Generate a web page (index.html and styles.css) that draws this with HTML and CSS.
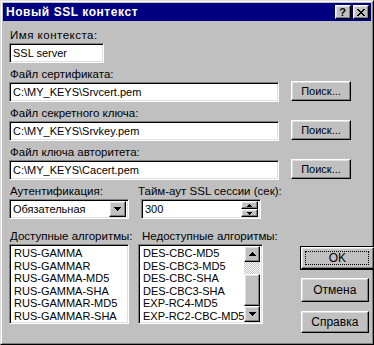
FILE: index.html
```html
<!DOCTYPE html>
<html lang="ru">
<head>
<meta charset="utf-8">
<title>Новый SSL контекст</title>
<link rel="stylesheet" href="styles.css">
</head>
<body>
<div class="window">
  <div class="frame">
    <div class="titlebar">
      <span class="title">Новый SSL контекст</span>
      <div class="tbtn tbtn-help">?</div>
      <div class="tbtn tbtn-close">
        <svg width="8" height="7" viewBox="0 0 8 7" shape-rendering="crispEdges"><path d="M0 0h2v1h-2z M6 0h2v1h-2z M1 1h2v1h-2z M5 1h2v1h-2z M2 2h4v1h-4z M3 3h2v1h-2z M2 4h4v1h-4z M1 5h2v1h-2z M5 5h2v1h-2z M0 6h2v1h-2z M6 6h2v1h-2z" fill="#000"/></svg>
      </div>
    </div>
    <div class="content">
      <div class="group">
        <div class="label label-name">Имя контекста:</div>
        <div class="edit edit-name">SSL server</div>
      </div>
      <div class="group">
        <div class="label">Файл сертификата:</div>
        <div class="filerow">
          <div class="edit edit-file">C:\MY_KEYS\Srvcert.pem</div>
          <div class="btn btn-browse">Поиск...</div>
        </div>
      </div>
      <div class="group">
        <div class="label">Файл секретного ключа:</div>
        <div class="filerow">
          <div class="edit edit-file">C:\MY_KEYS\Srvkey.pem</div>
          <div class="btn btn-browse">Поиск...</div>
        </div>
      </div>
      <div class="group">
        <div class="label">Файл ключа авторитета:</div>
        <div class="filerow">
          <div class="edit edit-file">C:\MY_KEYS\Cacert.pem</div>
          <div class="btn btn-browse">Поиск...</div>
        </div>
      </div>
      <div class="pairrow">
        <div class="col col-left">
          <div class="label">Аутентификация:</div>
          <div class="edit combo">
            <span class="combo-text">Обязательная</span>
            <div class="btn drop">
              <svg width="7" height="4" viewBox="0 0 7 4" shape-rendering="crispEdges"><path d="M0 0h7v1h-7z M1 1h5v1h-5z M2 2h3v1h-3z M3 3h1v1h-1z" fill="#000"/></svg>
            </div>
          </div>
        </div>
        <div class="col col-right">
          <div class="label label-timeout">Тайм-аут SSL сессии (сек):</div>
          <div class="edit spin">
            <span class="spin-text">300</span>
            <div class="spin-btns">
              <div class="btn spin-btn"><svg width="5" height="3" viewBox="0 0 5 3" shape-rendering="crispEdges"><path d="M2 0h1v1h-1z M1 1h3v1h-3z M0 2h5v1h-5z" fill="#000"/></svg></div>
              <div class="btn spin-btn"><svg width="5" height="3" viewBox="0 0 5 3" shape-rendering="crispEdges"><path d="M0 0h5v1h-5z M1 1h3v1h-3z M2 2h1v1h-1z" fill="#000"/></svg></div>
            </div>
          </div>
        </div>
      </div>
      <div class="bottomrow">
        <div class="col col-left">
          <div class="label">Доступные алгоритмы:</div>
          <div class="edit list list-left">
            <div class="items">
              <div>RUS-GAMMA</div>
              <div>RUS-GAMMAR</div>
              <div>RUS-GAMMA-MD5</div>
              <div>RUS-GAMMA-SHA</div>
              <div>RUS-GAMMAR-MD5</div>
              <div>RUS-GAMMAR-SHA</div>
            </div>
          </div>
        </div>
        <div class="col col-list2">
          <div class="label label-unavail">Недоступные алгоритмы:</div>
          <div class="edit list list-right">
            <div class="items">
              <div>DES-CBC-MD5</div>
              <div>DES-CBC3-MD5</div>
              <div>DES-CBC-SHA</div>
              <div>DES-CBC3-SHA</div>
              <div>EXP-RC4-MD5</div>
              <div>EXP-RC2-CBC-MD5</div>
            </div>
            <div class="vscroll">
              <div class="btn sb-btn"><svg width="7" height="4" viewBox="0 0 7 4" shape-rendering="crispEdges"><path d="M3 0h1v1h-1z M2 1h3v1h-3z M1 2h5v1h-5z M0 3h7v1h-7z" fill="#000"/></svg></div>
              <div class="sb-track"></div>
              <div class="btn sb-thumb"></div>
              <div class="btn sb-btn"><svg width="7" height="4" viewBox="0 0 7 4" shape-rendering="crispEdges"><path d="M0 0h7v1h-7z M1 1h5v1h-5z M2 2h3v1h-3z M3 3h1v1h-1z" fill="#000"/></svg></div>
            </div>
          </div>
        </div>
        <div class="actions">
          <div class="btn-default"><div class="btn btn-ok"><span class="focus">OK</span></div></div>
          <div class="btn btn-cancel">Отмена</div>
          <div class="btn btn-help">Справка</div>
        </div>
      </div>
    </div>
  </div>
</div>
</body>
</html>
```
FILE: styles.css
```css
html, body {
  margin: 0;
  padding: 0;
  background: #c0c0c0;
}
body {
  width: 374px;
  height: 345px;
  overflow: hidden;
  font-family: "Liberation Sans", Arial, sans-serif;
  font-size: 11px;
  color: #000;
}
.window {
  box-sizing: border-box;
  width: 374px;
  height: 345px;
  border: 1px solid;
  border-color: #dfdfdf #000 #000 #dfdfdf;
  background: #c0c0c0;
}
.frame {
  box-sizing: border-box;
  height: 100%;
  border: 1px solid;
  border-color: #fff #808080 #808080 #fff;
  padding: 1px;
  display: flex;
  flex-direction: column;
}
.titlebar {
  height: 18px;
  background: #000080;
  display: flex;
  align-items: center;
  padding: 0 2px 0 3px;
}
.title {
  color: #fff;
  font-weight: bold;
  font-size: 12px;
  letter-spacing: 0.55px;
  line-height: 18px;
  flex: 1;
}
.tbtn {
  box-sizing: border-box;
  width: 16px;
  height: 14px;
  background: #c0c0c0;
  border: 1px solid;
  border-color: #fff #000 #000 #fff;
  box-shadow: inset -1px -1px #808080, inset 1px 1px #dfdfdf;
  display: flex;
  align-items: center;
  justify-content: center;
  font-weight: bold;
  font-size: 11px;
  line-height: 12px;
}
.tbtn-help {
  margin-right: 2px;
  padding-right: 1px;
}
.tbtn-close svg {
  display: block;
  margin-left: -1px;
}
.content {
  padding: 8px 0 0 6px;
}
.label {
  line-height: 13px;
  height: 13px;
  margin-bottom: 1px;
  padding-left: 1px;
  white-space: nowrap;
  font-size: 11.5px;
}
.label-name {
  letter-spacing: 0.5px;
}
.group {
  margin-bottom: 5px;
}
.edit {
  box-sizing: border-box;
  height: 20px;
  background: #fff;
  border: 1px solid;
  border-color: #808080 #fff #fff #808080;
  box-shadow: inset 1px 1px #000, inset -1px -1px #dfdfdf;
  padding: 1px 2px 0 3px;
  line-height: 16px;
  white-space: nowrap;
}
.edit-name {
  width: 95px;
}
.filerow {
  display: flex;
  align-items: flex-start;
}
.edit-file {
  width: 270px;
}
.btn {
  box-sizing: border-box;
  background: #c0c0c0;
  border: 1px solid;
  border-color: #fff #000 #000 #fff;
  box-shadow: inset -1px -1px #808080, inset 1px 1px #dfdfdf;
  display: flex;
  align-items: center;
  justify-content: center;
}
.btn-browse {
  width: 60px;
  height: 20px;
  margin-left: 12px;
  margin-top: -1px;
}
.pairrow {
  display: flex;
  margin-top: 2px;
}
.col-left {
  width: 120px;
}
.col-right {
  margin-left: 9px;
}
.combo {
  display: flex;
  align-items: flex-start;
  padding: 1px 2px 0 3px;
}
.combo-text {
  flex: 1;
}
.drop {
  width: 17px;
  height: 16px;
}
.label-timeout {
  padding-left: 0;
}
.spin {
  width: 120px;
  margin-left: 3px;
  display: flex;
  align-items: flex-start;
}
.spin-text {
  flex: 1;
}
.spin-btns {
  display: flex;
  flex-direction: column;
}
.spin-btn {
  width: 17px;
  height: 8px;
}
.spin-btn svg {
  display: block;
}
.bottomrow {
  display: flex;
  margin-top: 11px;
}
.list {
  height: 80px;
  padding: 2px 2px 2px 4px;
  line-height: 12.5px;
}
.list-left {
  width: 120px;
}
.col-list2 {
  margin-left: 9px;
}
.label-unavail {
  padding-left: 4px;
}
.list-right {
  width: 125px;
  display: flex;
  padding-right: 2px;
  padding-top: 2px;
}
.list-right .items {
  flex: 1;
  overflow: hidden;
}
.vscroll {
  width: 16px;
  height: 76px;
  margin-top: -1px;
  display: flex;
  flex-direction: column;
}
.sb-btn {
  width: 16px;
  height: 16px;
  flex: none;
}
.sb-track {
  height: 12px;
  background: repeating-conic-gradient(#c0c0c0 0 25%, #fff 0 50%) 0 0 / 2px 2px;
}
.sb-thumb {
  height: 32px;
  flex: none;
}
.actions {
  margin-left: 22px;
  margin-top: 16px;
  display: flex;
  flex-direction: column;
  align-items: flex-start;
}
.btn-default {
  border: 1px solid #000;
  width: 75px;
  height: 24px;
  box-sizing: border-box;
}
.btn-ok {
  width: 100%;
  height: 100%;
}
.focus {
  display: block;
  box-sizing: border-box;
  width: 64px;
  height: 14px;
  border: 1px dotted #000;
  text-align: center;
  line-height: 12px;
  font-size: 12px;
}
.btn-cancel {
  width: 68px;
  height: 24px;
  margin-top: 8px;
  margin-left: 1px;
  font-size: 12px;
}
.btn-help {
  width: 68px;
  height: 22px;
  margin-top: 9px;
  margin-left: 1px;
  font-size: 12px;
}
```
